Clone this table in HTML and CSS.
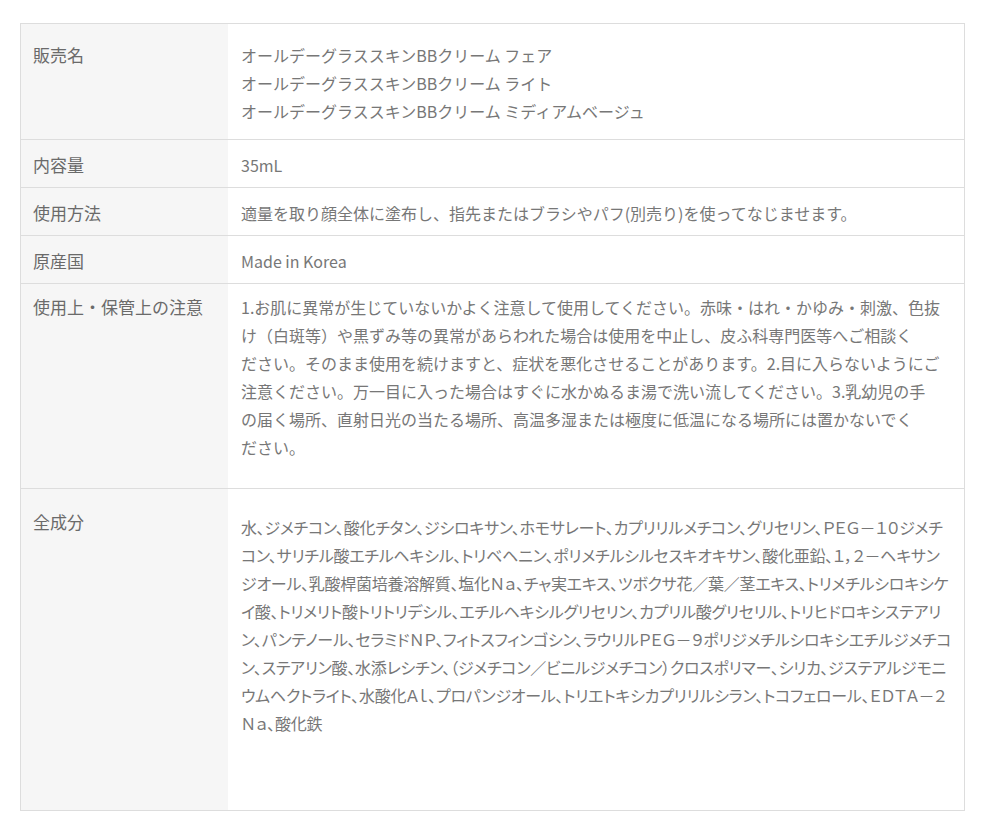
FILE: index.html
```html
<!DOCTYPE html>
<html lang="ja">
<head>
  <meta charset="utf-8">
  <title>商品情報</title>
  <link rel="stylesheet" href="styles.css">
</head>
<body>
  <div class="spec-wrap">
    <table class="spec-table">
      <tr class="row-name">
        <th>販売名</th>
        <td>
          オールデーグラススキンBBクリーム フェア<br>
          オールデーグラススキンBBクリーム ライト<br>
          オールデーグラススキンBBクリーム ミディアムベージュ
        </td>
      </tr>
      <tr>
        <th>内容量</th>
        <td>35mL</td>
      </tr>
      <tr>
        <th>使用方法</th>
        <td>適量を取り顔全体に塗布し、指先またはブラシやパフ(別売り)を使ってなじませます。</td>
      </tr>
      <tr>
        <th>原産国</th>
        <td>Made in Korea</td>
      </tr>
      <tr class="row-caution">
        <th>使用上・保管上の注意</th>
        <td>1.お肌に異常が生じていないかよく注意して使用してください。赤味・はれ・かゆみ・刺激、色抜<br>け（白斑等）や黒ずみ等の異常があらわれた場合は使用を中止し、皮ふ科専門医等へご相談く<br>ださい。そのまま使用を続けますと、症状を悪化させることがあります。2.目に入らないようにご<br>注意ください。万一目に入った場合はすぐに水かぬるま湯で洗い流してください。3.乳幼児の手<br>の届く場所、直射日光の当たる場所、高温多湿または極度に低温になる場所には置かないでく<br>ださい。</td>
      </tr>
      <tr class="row-ingredients">
        <th>全成分</th>
        <td>
          <p class="ingredients">水、ジメチコン、酸化チタン、ジシロキサン、ホモサレート、カプリリルメチコン、グリセリン、ＰＥＧ－１０ジメチ<br>コン、サリチル酸エチルヘキシル、トリベヘニン、ポリメチルシルセスキオキサン、酸化亜鉛、１，２－ヘキサン<br>ジオール、乳酸桿菌培養溶解質、塩化Ｎａ、チャ実エキス、ツボクサ花／葉／茎エキス、トリメチルシロキシケ<br>イ酸、トリメリト酸トリトリデシル、エチルヘキシルグリセリン、カプリル酸グリセリル、トリヒドロキシステアリ<br>ン、パンテノール、セラミドＮＰ、フィトスフィンゴシン、ラウリルＰＥＧ－９ポリジメチルシロキシエチルジメチコ<br>ン、ステアリン酸、水添レシチン、（ジメチコン／ビニルジメチコン）クロスポリマー、シリカ、ジステアルジモニ<br>ウムヘクトライト、水酸化Ａｌ、プロパンジオール、トリエトキシカプリリルシラン、トコフェロール、ＥＤＴＡ－２<br>Ｎａ、酸化鉄</p>
        </td>
      </tr>
    </table>
  </div>
</body>
</html>
```

FILE: styles.css
```css
body {
  margin: 0;
  background-color: #fff;
  font-family: "Noto Sans CJK JP", "Noto Sans", sans-serif;
  color: #777;
}

.spec-wrap {
  padding: 23px 35px 20px 20px;
}

.spec-table {
  width: 100%;
  border-collapse: collapse;
  border: 1px solid #ddd;
  font-size: 16px;
  line-height: 28px;
}

.spec-table th,
.spec-table td {
  vertical-align: top;
  text-align: left;
  border-top: 1px solid #ddd;
  padding: 11px 4px 8px 13px;
}

.spec-table th {
  width: 191px;
  padding-left: 12px;
  background-color: #f6f6f6;
  font-size: 17px;
  font-weight: normal;
  color: #6a6a6a;
}

.spec-table td {
  color: #777;
}

/* 販売名 */
.row-name th,
.row-name td {
  padding-top: 17px;
  padding-bottom: 14px;
}

/* 使用上・保管上の注意 */
.row-caution th,
.row-caution td {
  padding-top: 9px;
  padding-bottom: 27px;
}

/* 全成分 */
.row-ingredients th {
  padding-top: 19px;
}

.row-ingredients td {
  padding-top: 24px;
  padding-bottom: 73px;
}

.ingredients {
  margin: 0;
  line-height: 28px;
  letter-spacing: -0.25px;
  font-feature-settings: "palt";
}
```
